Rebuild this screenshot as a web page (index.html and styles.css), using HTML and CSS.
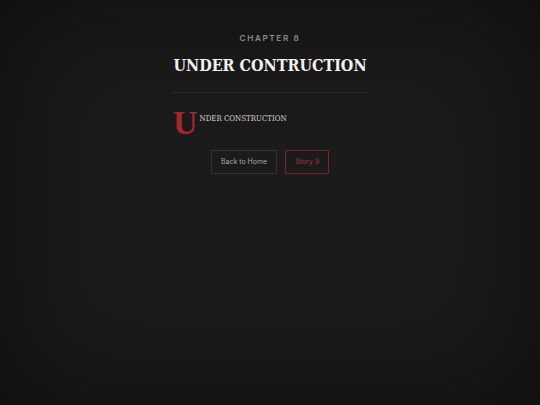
FILE: index.html
```html
<!DOCTYPE html>
<html lang="en">
<head>
    <meta charset="UTF-8">
    <title>Chapter 8 - Under Contruction</title>
    <link rel="stylesheet" href="styles.css">
</head>
<body>
<div class="page">
    <main class="chapter">
        <p class="chapter-num">Chapter 8</p>
        <h1 class="chapter-title">Under Contruction</h1>
        <hr class="rule">
        <p class="story">Under construction</p>
        <nav class="chapter-nav">
            <a class="btn" href="#">Back to Home</a>
            <a class="btn btn-next" href="#">Story 9</a>
        </nav>
    </main>
</div>
</body>
</html>
```

FILE: styles.css
```css
* {
    margin: 0;
    padding: 0;
    box-sizing: border-box;
}

html, body {
    height: 100%;
}

body {
    background-color: #1b1b1b;
    font-family: "Inter", "Liberation Sans", sans-serif;
    color: #ddd;
}

/* dark vignette round the edges */
.page {
    min-height: 100%;
    box-shadow: inset 0 0 110px 10px rgba(0, 0, 0, .45);
    padding-top: 33px;
}

.chapter {
    width: 194px;
    margin: 0 auto;
}

.chapter-num {
    text-align: center;
    font-size: 8.2px;
    line-height: 10px;
    font-weight: 600;
    letter-spacing: 1.6px;
    text-transform: uppercase;
    color: #8a8a8a;
}

.chapter-title {
    margin-top: 12px;
    text-align: center;
    font-family: "DejaVu Serif Condensed", "DejaVu Serif", serif;
    font-stretch: condensed;
    font-size: 16px;
    line-height: 22px;
    font-weight: bold;
    text-transform: uppercase;
    color: #f2f2f2;
    white-space: nowrap;
}

.rule {
    border: 0;
    border-top: 1px solid #2a2a2a;
    margin: 15px 0 17px;
}

.story {
    font-family: "DejaVu Serif Condensed", "DejaVu Serif", serif;
    font-stretch: condensed;
    font-size: 7.8px;
    line-height: 14px;
    padding-top: 2px;
    text-transform: uppercase;
    color: #d6d6d6;
    min-height: 26px;
}

.story::first-letter {
    float: left;
    font-family: "Liberation Serif", serif;
    font-stretch: normal;
    font-size: 34px;
    line-height: 24px;
    font-weight: bold;
    color: #a3282b;
    margin-right: 2px;
    margin-top: -1px;
}

.chapter-nav {
    display: flex;
    justify-content: center;
    gap: 8px;
    margin-top: 14px;
}

.btn {
    display: inline-block;
    padding: 7px 9px;
    font-size: 7px;
    line-height: 8px;
    color: #a5a5a5;
    text-decoration: none;
    border: 1px solid #333;
    border-radius: 1px;
}

.btn-next {
    color: #a83234;
    border-color: #7a2426;
}
```
